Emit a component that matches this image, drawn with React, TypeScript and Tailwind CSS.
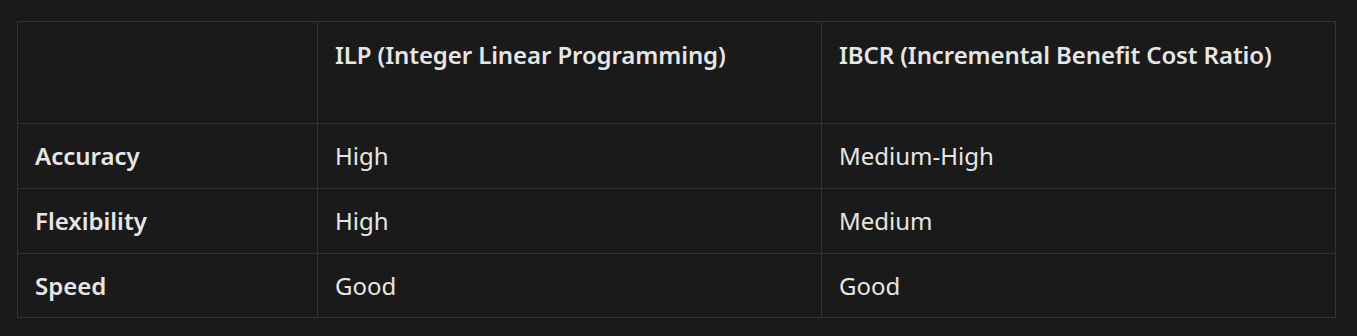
const rows = [
  ["Accuracy", "High", "Medium-High"],
  ["Flexibility", "High", "Medium"],
  ["Speed", "Good", "Good"],
]

export default function App() {
  return (
    <div
      className="h-[336px] w-full bg-[#1a1a1a] pl-[17px] pt-[21px] text-[24px] leading-[32px] text-[#e6e6e6]"
      style={{ fontFamily: '"Noto Sans", "Open Sans", sans-serif' }}
    >
      <table className="w-[1318px] table-fixed border-collapse border border-[#333333]">
        <colgroup>
          <col className="w-[300px]" />
          <col className="w-[504px]" />
          <col className="w-[514px]" />
        </colgroup>
        <thead>
          <tr className="h-[102px]">
            <th className="border border-[#333333] pl-[17px] pr-[18px] pt-[17px] text-left align-top font-semibold"></th>
            <th className="border border-[#333333] pl-[17px] pr-[18px] pt-[17px] text-left align-top font-semibold tracking-[-0.1px]">
              ILP (Integer Linear Programming)
            </th>
            <th className="border border-[#333333] pl-[17px] pr-[18px] pt-[17px] text-left align-top font-semibold tracking-[-0.1px]">
              IBCR (Incremental Benefit Cost Ratio)
            </th>
          </tr>
        </thead>
        <tbody>
          {rows.map((r, i) => (
            <tr key={r[0]} className={i === 2 ? "h-[64px]" : "h-[65px]"}>
              <td className="border border-[#333333] pl-[17px] pr-[18px] align-middle font-semibold">{r[0]}</td>
              <td className="border border-[#333333] pl-[17px] pr-[18px] align-middle">{r[1]}</td>
              <td className="border border-[#333333] pl-[17px] pr-[18px] align-middle">{r[2]}</td>
            </tr>
          ))}
        </tbody>
      </table>
    </div>
  )
}
